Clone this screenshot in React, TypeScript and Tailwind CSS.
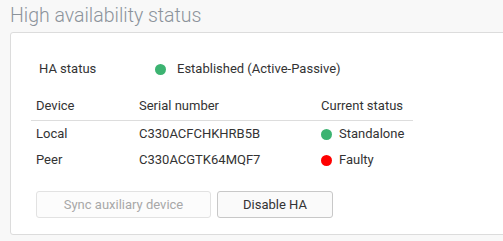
import React from 'react';

// ============================================================
// High availability status panel
// ============================================================

interface Device {
  name: string;
  serial: string;
  status: string;
  ok: boolean;
}

const devices: Device[] = [
  { name: 'Local', serial: 'C330ACFCHKHRB5B', status: 'Standalone', ok: true },
  { name: 'Peer', serial: 'C330ACGTK64MQF7', status: 'Faulty', ok: false },
];

function Dot({ ok }: { ok: boolean }) {
  return (
    <span
      className={`inline-block w-[11px] h-[11px] rounded-full flex-shrink-0 ${ok ? 'bg-[#3cb371]' : 'bg-[#ff0000]'}`}
    />
  );
}

export default function App() {
  return (
    <div
      className="w-[503px] h-[241px] bg-[#f8f8f8] overflow-hidden text-[13px] text-[#333]"
      style={{ fontFamily: 'Roboto, "Noto Sans", sans-serif' }}
    >
      <h1 className="pl-[10px] pt-[3px] h-[32px] text-[19.5px] font-light text-[#8c939b] leading-[26px]">
        High availability status
      </h1>

      <div className="ml-[10px] w-[510px] h-[203px] bg-white border border-[#dcdcdc] rounded-[3px] pl-[20px] pt-[26px]">
        {/* HA status */}
        <div className="flex items-center h-[20px] pl-[8px]">
          <span className="w-[116px]">HA status</span>
          <Dot ok />
          <span className="ml-[11px]">Established (Active-Passive)</span>
        </div>

        {/* Devices table */}
        <div className="mt-[13px] w-[382px]">
          <div className="grid grid-cols-[103px_182px_1fr] h-[29px] items-center border-b border-[#dddddd] pl-[5px]">
            <span>Device</span>
            <span>Serial number</span>
            <span>Current status</span>
          </div>
          {devices.map((d) => (
            <div key={d.name} className="grid grid-cols-[103px_182px_1fr] h-[26px] items-center pl-[5px]">
              <span>{d.name}</span>
              <span>{d.serial}</span>
              <span className="flex items-center gap-[7px]">
                <Dot ok={d.ok} />
                {d.status}
              </span>
            </div>
          ))}
        </div>

        {/* Actions */}
        <div className="flex gap-[6px] mt-[18px] pl-[5px]">
          <button
            disabled
            className="w-[175px] h-[27px] border border-[#e2e2e2] rounded-[3px] bg-[#fcfcfc] text-[#a8a8a8]"
          >
            Sync auxiliary device
          </button>
          <button className="w-[116px] h-[27px] border border-[#c8c8c8] rounded-[3px] bg-[#fafafa] text-[#333]">
            Disable HA
          </button>
        </div>
      </div>
    </div>
  );
}
